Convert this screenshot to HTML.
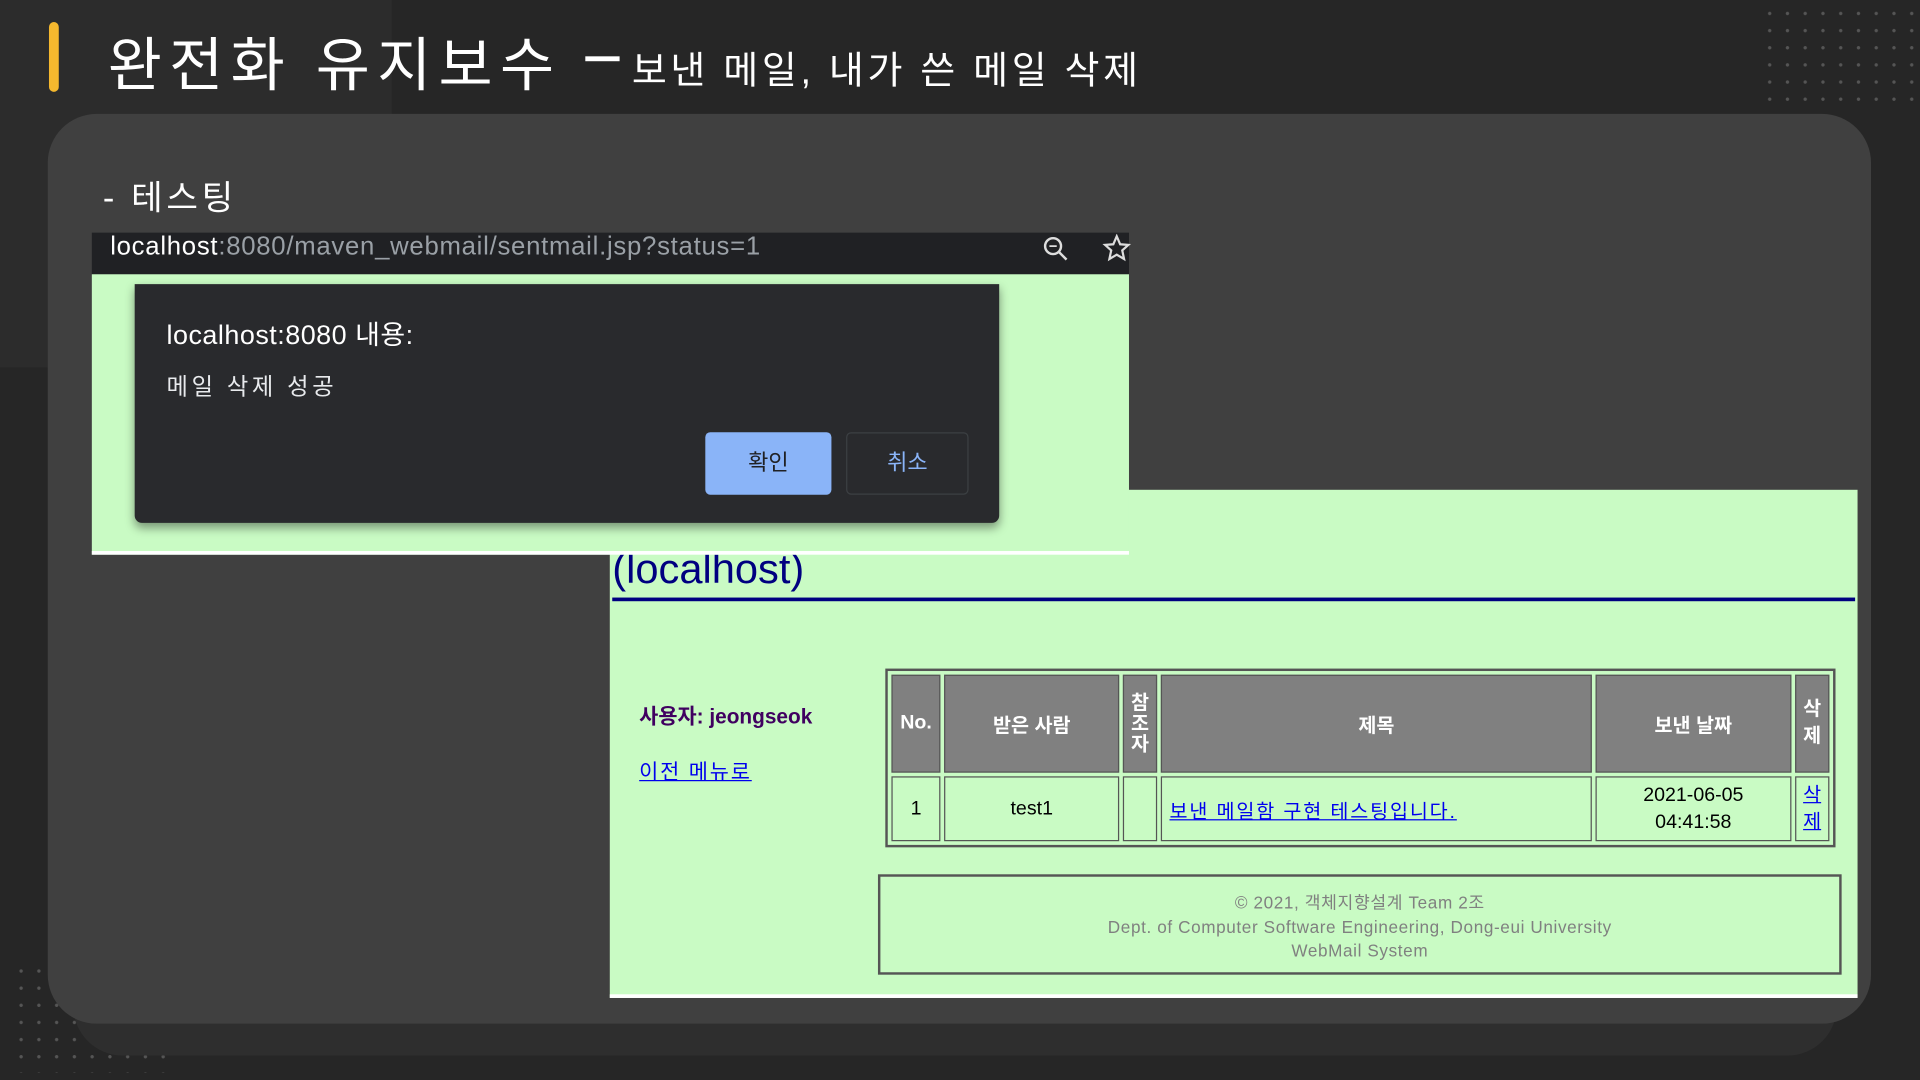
<!DOCTYPE html>
<html><head><meta charset="utf-8"><style>
html,body{margin:0;padding:0;width:1920px;height:1080px;overflow:hidden;background:#262626;}
#s{position:absolute;left:0;top:0;width:1568px;height:882px;transform:scale(1.22449);transform-origin:0 0;font-family:"Liberation Sans","Noto Sans CJK KR",sans-serif;}
.a{position:absolute;}
.dots{background-image:radial-gradient(circle,#555 1.2px,transparent 1.6px);background-size:14.5px 14px;}
table{border-collapse:separate;border-spacing:3px;}
td{border:1px solid #555;text-align:center;font-size:16px;}
</style></head><body><div id="s">
<div class="a" style="left:0;top:0;width:320px;height:300px;background:#2c2c2c;border-radius:0 0 60px 0"></div>
<div class="a dots" style="left:1438px;top:4px;width:125px;height:80px"></div>
<div class="a dots" style="left:10px;top:786px;width:130px;height:90px"></div>
<div class="a" style="left:40px;top:18px;width:8px;height:57px;background:#f5b82e;border-radius:4px"></div>
<div class="a" style="left:88px;top:14px;color:#fff;font-size:48px;white-space:nowrap;letter-spacing:6px">완전화 유지보수</div>
<div class="a" style="left:478px;top:46px;width:28px;height:4px;background:#fff"></div>
<div class="a" style="left:516px;top:32px;color:#fff;font-size:31px;white-space:nowrap;letter-spacing:3px">보낸 메일, 내가 쓴 메일 삭제</div>
<div class="a" style="left:60px;top:120px;width:1440px;height:742px;background:#2e2e2e;border-radius:40px"></div>
<div class="a" style="left:39px;top:93px;width:1489px;height:743px;background:#404040;border-radius:40px"></div>
<div class="a" style="left:84px;top:140px;color:#fff;font-size:28px;letter-spacing:3px">- 테스팅</div>

<div class="a" style="left:498px;top:400px;width:1019px;height:412px;background:#c9fbc4;border-bottom:3px solid #fff"></div>
<div class="a" style="left:500px;top:446px;color:#000080;font-size:34px">(localhost)</div>
<div class="a" style="left:500px;top:488px;width:1015px;height:3px;background:#000080"></div>
<div class="a" style="left:522px;top:571px;color:#400060;font-size:17px;font-weight:bold">사용자: jeongseok</div>
<div class="a" style="left:522px;top:616px;color:#0000ee;font-size:17px;text-decoration:underline;letter-spacing:1.5px">이전 메뉴로</div>
<table class="a" style="left:723px;top:546px;width:776px;height:146px;border:2px solid #555">
<tr style="height:80px;background:#808080;color:#fff;font-weight:bold"><td style="width:36px">No.</td><td style="width:138px">받은 사람</td><td style="width:24px;line-height:17px">참<br>조<br>자</td><td style="width:346px">제목</td><td style="width:155px">보낸 날짜</td><td style="width:24px;line-height:22px">삭<br>제</td></tr>
<tr><td>1</td><td>test1</td><td></td><td style="text-align:left;padding-left:6px"><span style="color:#0000ee;text-decoration:underline;letter-spacing:1.5px">보낸 메일함 구현 테스팅입니다.</span></td><td style="line-height:22px">2021-06-05<br>04:41:58</td><td style="line-height:22px;color:#0000ee;text-decoration:underline">삭<br>제</td></tr>
</table>
<div class="a" style="left:717px;top:714px;width:787px;height:82px;border:2px solid #555;color:#808080;font-size:14px;letter-spacing:0.5px;text-align:center;line-height:19.5px;padding-top:12px;box-sizing:border-box">© 2021, 객체지향설계 Team 2조<br>Dept. of Computer Software Engineering, Dong-eui University<br>WebMail System</div>

<div class="a" style="left:75px;top:190px;width:847px;height:34px;background:#202124;"></div>
<div class="a" style="left:90px;top:189px;font-size:21px;line-height:26px;color:#fff;letter-spacing:0.6px">localhost<span style="color:#9aa0a6">:8080/maven_webmail/sentmail.jsp?status=1</span></div>
<svg class="a" style="left:850px;top:191px" width="75" height="24"><circle cx="10" cy="10" r="6.5" fill="none" stroke="#ddd" stroke-width="2"/><line x1="15" y1="15" x2="21" y2="21" stroke="#ddd" stroke-width="2"/><line x1="7" y1="10" x2="13" y2="10" stroke="#ddd" stroke-width="1.5"/><path d="M62 2 L64.8 8.5 L71.5 9 L66.5 13.5 L68 20.5 L62 17 L56 20.5 L57.5 13.5 L52.5 9 L59.2 8.5 Z" fill="none" stroke="#ddd" stroke-width="1.8"/></svg>
<div class="a" style="left:75px;top:224px;width:847px;height:226px;background:#c9fbc4;border-bottom:3px solid #fff"></div>
<div class="a" style="left:110px;top:232px;width:706px;height:195px;background:#292a2d;border-radius:0 0 6px 6px;box-shadow:0 4px 8px rgba(0,0,0,.4)"></div>
<div class="a" style="left:136px;top:256px;color:#fff;font-size:22px;letter-spacing:0.4px">localhost:8080 내용:</div>
<div class="a" style="left:136px;top:301px;color:#e8eaed;font-size:19px;letter-spacing:3px">메일 삭제 성공</div>
<div class="a" style="left:576px;top:353px;width:103px;height:51px;background:#8ab4f8;border-radius:4px;color:#202124;font-size:18px;line-height:50px;text-align:center">확인</div>
<div class="a" style="left:691px;top:353px;width:98px;height:49px;border:1px solid #3c4043;border-radius:4px;color:#8ab4f8;font-size:18px;line-height:49px;text-align:center">취소</div>
</div></body></html>
